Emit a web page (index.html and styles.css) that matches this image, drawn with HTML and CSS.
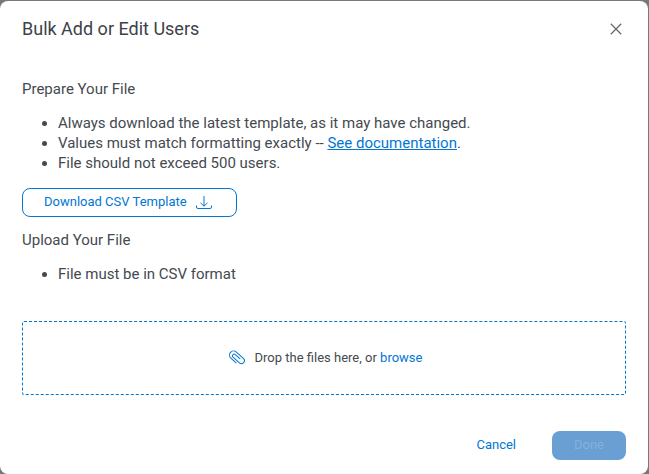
FILE: index.html
```
<!DOCTYPE html>
<html lang="en">
<head>
    <meta charset="UTF-8">
    <title>Bulk Add or Edit Users</title>
    <link rel="stylesheet" href="styles.css">
</head>
<body>
<div class="modal" role="dialog" aria-labelledby="title">
    <div class="header">
        <h1 id="title">Bulk Add or Edit Users</h1>
        <button class="close" type="button" aria-label="Close">
            <svg width="12" height="12" viewBox="0 0 12 12"><path d="M.8 .8l10.400 10.400M11.200 .8L.8 11.200"/></svg>
        </button>
    </div>
    <div class="content">
        <h2>Prepare Your File</h2>
        <ul>
            <li>Always download the latest template, as it may have changed.</li>
            <li>Values must match formatting exactly -- <a href="#">See documentation</a>.</li>
            <li>File should not exceed 500 users.</li>
        </ul>
        <button class="download" type="button">
            Download CSV Template
            <svg width="18" height="16" viewBox="0 0 18 16"><path d="M9 2v10M5.500 8.800L9 12.200l3.500-3.400M1.500 11.500v1.500q0 1.500 1.500 1.500h12q1.500 0 1.500-1.500v-1.500"/></svg>
        </button>
        <h2>Upload Your File</h2>
        <ul>
            <li>File must be in CSV format</li>
        </ul>
        <div class="drop">
            <svg width="16" height="16" viewBox="0 0 16 16"><path transform="rotate(42 8 8)" d="M11 12.200H3.500a4.100 4.100 0 0 1 0-8.200H13a3 3 0 0 1 0 6H4.500a1.700 1.700 0 0 1 0-3.400H11"/></svg>
            <span>Drop the files here, or <a href="#">browse</a></span>
        </div>
    </div>
    <div class="footer">
        <button class="cancel" type="button">Cancel</button>
        <button class="done" type="button" disabled>Done</button>
    </div>
</div>
</body>
</html>
```
FILE: styles.css
```
*{
    box-sizing: border-box;
    margin: 0;
    padding: 0;
}
body{
    min-height: 100vh;
    padding: 1px 1px 0 0;
    background: #77787b;
    color: #444a50;
    font: 15px/20px Roboto, sans-serif;
}
.modal{
    padding: 16px 22px 14px;
    background: #fff;
    border-radius: 8px;
}
.header{
    display: flex;
    justify-content: space-between;
    align-items: center;
    margin-bottom: 38px;
}
h1{
    color: #3c4248;
    font-size: 18px;
    font-weight: 400;
    line-height: 24px;
}
h2{
    font-size: 15px;
    font-weight: 400;
}
ul{
    margin: 14px 0;
    padding-left: 36px;
}
a{
    color: #0176d3;
}
button{
    border: 0;
    background: none;
    color: #0176d3;
    font: 13px/20px Roboto, sans-serif;
}
svg{
    display: block;
    fill: none;
    stroke: #0176d3;
    stroke-width: 1;
}
.close{
    padding: 4px;
}
.close svg{
    stroke: #66696d;
    stroke-width: 1.3;
}
.download{
    display: flex;
    align-items: center;
    gap: 8px;
    height: 29px;
    margin: 15px 0 13px;
    padding: 0 23px 2px 21px;
    border: 1px solid #0176d3;
    border-radius: 8px;
}
.drop{
    display: flex;
    justify-content: center;
    align-items: center;
    gap: 10px;
    height: 74px;
    margin-top: 37px;
    padding-left: 3px;
    border: 1px dashed #0176d3;
    border-radius: 2px;
    font-size: 13px;
}
.drop a{
    text-decoration: none;
}
.footer{
    display: flex;
    justify-content: flex-end;
    margin-top: 36px;
    gap: 24px;
}
.footer button{
    height: 29px;
    padding: 0 12px 2px;
}
.footer .done{
    width: 74px;
    border-radius: 8px;
    background: #699fd2;
    color: #84b2dc;
}
```
